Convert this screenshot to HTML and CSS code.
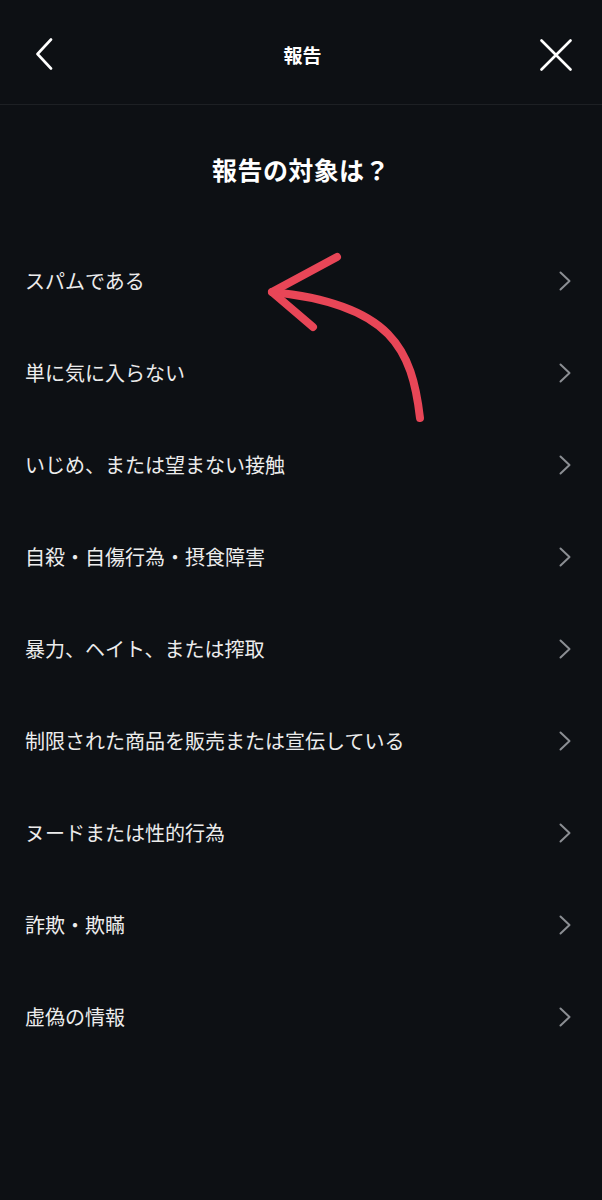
FILE: index.html
```html
<!DOCTYPE html>
<html lang="ja">
<head>
<meta charset="utf-8">
<link rel="stylesheet" href="styles.css">
</head>
<body>
<div class="screen">
  <header class="topbar">
    <svg class="back" width="18" height="32" viewBox="0 0 18 32"><path d="M16 1.5 L2.5 16 L16 30.5" fill="none" stroke="#fff" stroke-width="2.6" stroke-linecap="round" stroke-linejoin="round"/></svg>
    <div class="topbar-title">報告</div>
    <svg class="close" width="32" height="32" viewBox="0 0 32 32"><path d="M1.5 1.5 L30.5 30.5 M30.5 1.5 L1.5 30.5" fill="none" stroke="#fff" stroke-width="2.6" stroke-linecap="round"/></svg>
  </header>
  <h1 class="question">報告の対象は？</h1>
  <ul class="options">
    <li class="option"><span>スパムである</span><svg class="chev" width="12" height="20" viewBox="0 0 12 20"><path d="M1.5 1.5 L10.5 10 L1.5 18.5" fill="none" stroke="#8b8e93" stroke-width="2" stroke-linecap="round" stroke-linejoin="round"/></svg></li>
    <li class="option"><span>単に気に入らない</span><svg class="chev" width="12" height="20" viewBox="0 0 12 20"><path d="M1.5 1.5 L10.5 10 L1.5 18.5" fill="none" stroke="#8b8e93" stroke-width="2" stroke-linecap="round" stroke-linejoin="round"/></svg></li>
    <li class="option"><span>いじめ、または望まない接触</span><svg class="chev" width="12" height="20" viewBox="0 0 12 20"><path d="M1.5 1.5 L10.5 10 L1.5 18.5" fill="none" stroke="#8b8e93" stroke-width="2" stroke-linecap="round" stroke-linejoin="round"/></svg></li>
    <li class="option"><span>自殺・自傷行為・摂食障害</span><svg class="chev" width="12" height="20" viewBox="0 0 12 20"><path d="M1.5 1.5 L10.5 10 L1.5 18.5" fill="none" stroke="#8b8e93" stroke-width="2" stroke-linecap="round" stroke-linejoin="round"/></svg></li>
    <li class="option"><span>暴力、ヘイト、または搾取</span><svg class="chev" width="12" height="20" viewBox="0 0 12 20"><path d="M1.5 1.5 L10.5 10 L1.5 18.5" fill="none" stroke="#8b8e93" stroke-width="2" stroke-linecap="round" stroke-linejoin="round"/></svg></li>
    <li class="option"><span>制限された商品を販売または宣伝している</span><svg class="chev" width="12" height="20" viewBox="0 0 12 20"><path d="M1.5 1.5 L10.5 10 L1.5 18.5" fill="none" stroke="#8b8e93" stroke-width="2" stroke-linecap="round" stroke-linejoin="round"/></svg></li>
    <li class="option"><span>ヌードまたは性的行為</span><svg class="chev" width="12" height="20" viewBox="0 0 12 20"><path d="M1.5 1.5 L10.5 10 L1.5 18.5" fill="none" stroke="#8b8e93" stroke-width="2" stroke-linecap="round" stroke-linejoin="round"/></svg></li>
    <li class="option"><span>詐欺・欺瞞</span><svg class="chev" width="12" height="20" viewBox="0 0 12 20"><path d="M1.5 1.5 L10.5 10 L1.5 18.5" fill="none" stroke="#8b8e93" stroke-width="2" stroke-linecap="round" stroke-linejoin="round"/></svg></li>
    <li class="option"><span>虚偽の情報</span><svg class="chev" width="12" height="20" viewBox="0 0 12 20"><path d="M1.5 1.5 L10.5 10 L1.5 18.5" fill="none" stroke="#8b8e93" stroke-width="2" stroke-linecap="round" stroke-linejoin="round"/></svg></li>
  </ul>
  <svg class="annotation" width="602" height="1200" viewBox="0 0 602 1200">
    <g fill="none" stroke="#e84657" stroke-width="8" stroke-linecap="round" stroke-linejoin="round">
      <path d="M420 418 C412 350 392 304 272 292"/>
      <path d="M337 257 L272 292 L313 327"/>
    </g>
  </svg>
</div>
</body>
</html>
```

FILE: styles.css
```css
html, body {
  margin: 0;
  padding: 0;
  background: #0d1014;
}
body {
  font-family: "Noto Sans CJK JP", "Noto Sans", sans-serif;
  color: #ececec;
}
.screen {
  position: relative;
  width: 602px;
  height: 1200px;
  overflow: hidden;
}
.topbar {
  height: 105px;
  border-bottom: 1px solid #1d2024;
  display: flex;
  align-items: center;
  justify-content: space-between;
  padding: 0 30px 0 35px;
  box-sizing: border-box;
}
.topbar .back {
  margin-top: 4px;
}
.topbar .close {
  margin-top: 6px;
}
.topbar-title {
  font-size: 19px;
  font-weight: 700;
  color: #fff;
  margin-left: 12px;
  margin-top: 4px;
}
.question {
  margin: 49px 0 50px;
  text-align: center;
  font-size: 25px;
  line-height: 30px;
  font-weight: 700;
  letter-spacing: 0.4px;
  color: #fff;
}
.options {
  list-style: none;
  margin: 0;
  padding: 0;
}
.option {
  height: 92px;
  display: flex;
  align-items: center;
  justify-content: space-between;
  padding: 0 31px 0 25px;
  font-size: 20px;
  color: #ececec;
}
.option .chev {
  margin-top: 2px;
}
.annotation {
  position: absolute;
  left: 0;
  top: 0;
  pointer-events: none;
}
```
